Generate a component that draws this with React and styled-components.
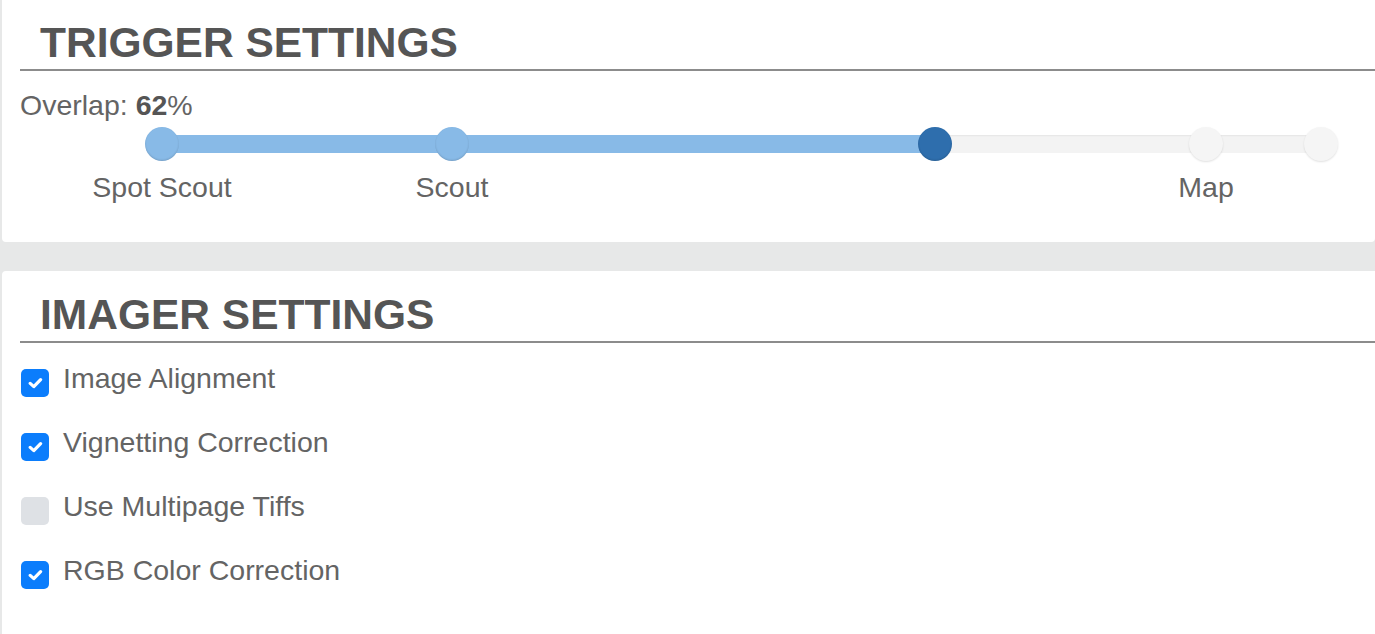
import React from "react";
import styled, { createGlobalStyle } from "styled-components";

const GlobalStyle = createGlobalStyle`
  html, body {
    margin: 0;
    padding: 0;
    background: #e7e8e8;
    font-family: "Liberation Sans", Arial, sans-serif;
    overflow: hidden;
  }
`;

const textGray = "#646464";
const headGray = "#555555";
const lightBlue = "#88bae7";
const darkBlue = "#2e6ead";

const Page = styled.div`
  display: flex;
  flex-direction: column;
  gap: 29px;
  padding-left: 2px;
`;

const Card = styled.section`
  background: #ffffff;
  border-radius: 0 0 4px 4px;
  padding: ${(p) => p.$top}px 0 0 18px;
  min-height: ${(p) => p.$height}px;
  box-sizing: border-box;

  & + & {
    border-radius: 4px 0 0 0;
  }
`;

const Title = styled.h2`
  margin: 0;
  padding: 0 0 5px 20px;
  font-size: 42.5px;
  line-height: 42px;
  font-weight: 700;
  color: ${headGray};
  border-bottom: 2px solid #8c8c8c;
`;

const Overlap = styled.div`
  margin-top: 17px;
  font-size: 28.5px;
  line-height: 34px;
  color: ${textGray};

  b {
    color: ${headGray};
  }
`;

const SliderWrap = styled.div`
  margin: 5px 37px 0 125px;
`;

const Rail = styled.div`
  position: relative;
  height: 34px;
  margin: 0 17px;
`;

const Track = styled.div`
  position: absolute;
  left: 0;
  right: 0;
  top: 8px;
  height: 18px;
  background: #f3f3f3;
  box-shadow: inset 0 1px 2px rgba(0, 0, 0, 0.06);
`;

const Fill = styled.div`
  position: absolute;
  left: 0;
  top: 8px;
  height: 18px;
  background: ${lightBlue};
`;

const Dot = styled.div`
  position: absolute;
  top: 0;
  width: 34px;
  height: 34px;
  margin-left: -17px;
  border-radius: 50%;
  box-sizing: border-box;
  background: ${(p) => (p.$active ? darkBlue : p.$filled ? lightBlue : "#f5f5f5")};
  box-shadow: ${(p) =>
    p.$filled || p.$active
      ? "inset 0 -1px 2px rgba(0,0,0,0.14)"
      : "0 1px 2px rgba(0,0,0,0.12)"};
`;

const Labels = styled.div`
  position: relative;
  height: 34px;
  margin: 9px 17px 0;
`;

const StopLabel = styled.span`
  position: absolute;
  top: 0;
  transform: translateX(-50%);
  white-space: nowrap;
  font-size: 28.5px;
  line-height: 34px;
  color: ${textGray};
`;

const List = styled.div`
  display: flex;
  flex-direction: column;
  gap: 28px;
  padding: 18px 0 0 1px;
`;

const Row = styled.label`
  display: flex;
  align-items: flex-start;
  gap: 14px;
  font-size: 28.5px;
  line-height: 34px;
  color: ${textGray};
`;

const Box = styled.span`
  flex: none;
  display: flex;
  align-items: center;
  justify-content: center;
  width: 28px;
  height: 28px;
  margin-top: 8px;
  border-radius: 5px;
  background: ${(p) => (p.$checked ? "#0b7dfc" : "#dee1e5")};
`;

const stops = [
  { pos: 0, label: "Spot Scout" },
  { pos: 25.02, label: "Scout" },
  { pos: 90.08, label: "Map" },
  { pos: 100, label: "" },
];
const handle = 66.7;

const options = [
  { label: "Image Alignment", checked: true },
  { label: "Vignetting Correction", checked: true },
  { label: "Use Multipage Tiffs", checked: false },
  { label: "RGB Color Correction", checked: true },
];

function Check() {
  return (
    <svg width="15" height="12" viewBox="0 0 15 12">
      <path
        d="M2.2 6.4 L5.8 9.6 L12.6 2.6"
        fill="none"
        stroke="#fff"
        strokeWidth="3.2"
        strokeLinecap="round"
        strokeLinejoin="round"
      />
    </svg>
  );
}

function Slider() {
  return (
    <SliderWrap>
      <Rail>
        <Track />
        <Fill style={{ width: `${handle}%` }} />
        {stops.map((s) => (
          <Dot key={s.pos} $filled={s.pos < handle} style={{ left: `${s.pos}%` }} />
        ))}
        <Dot $active style={{ left: `${handle}%` }} />
      </Rail>
      <Labels>
        {stops
          .filter((s) => s.label)
          .map((s) => (
            <StopLabel key={s.label} style={{ left: `${s.pos}%` }}>
              {s.label}
            </StopLabel>
          ))}
      </Labels>
    </SliderWrap>
  );
}

export default function App() {
  return (
    <Page>
      <GlobalStyle />
      <Card $top={22} $height={242}>
        <Title>TRIGGER SETTINGS</Title>
        <Overlap>
          Overlap: <b>62</b>%
        </Overlap>
        <Slider />
      </Card>
      <Card $top={23} $height={363}>
        <Title>IMAGER SETTINGS</Title>
        <List>
          {options.map((o) => (
            <Row key={o.label}>
              <Box $checked={o.checked}>{o.checked && <Check />}</Box>
              {o.label}
            </Row>
          ))}
        </List>
      </Card>
    </Page>
  );
}
